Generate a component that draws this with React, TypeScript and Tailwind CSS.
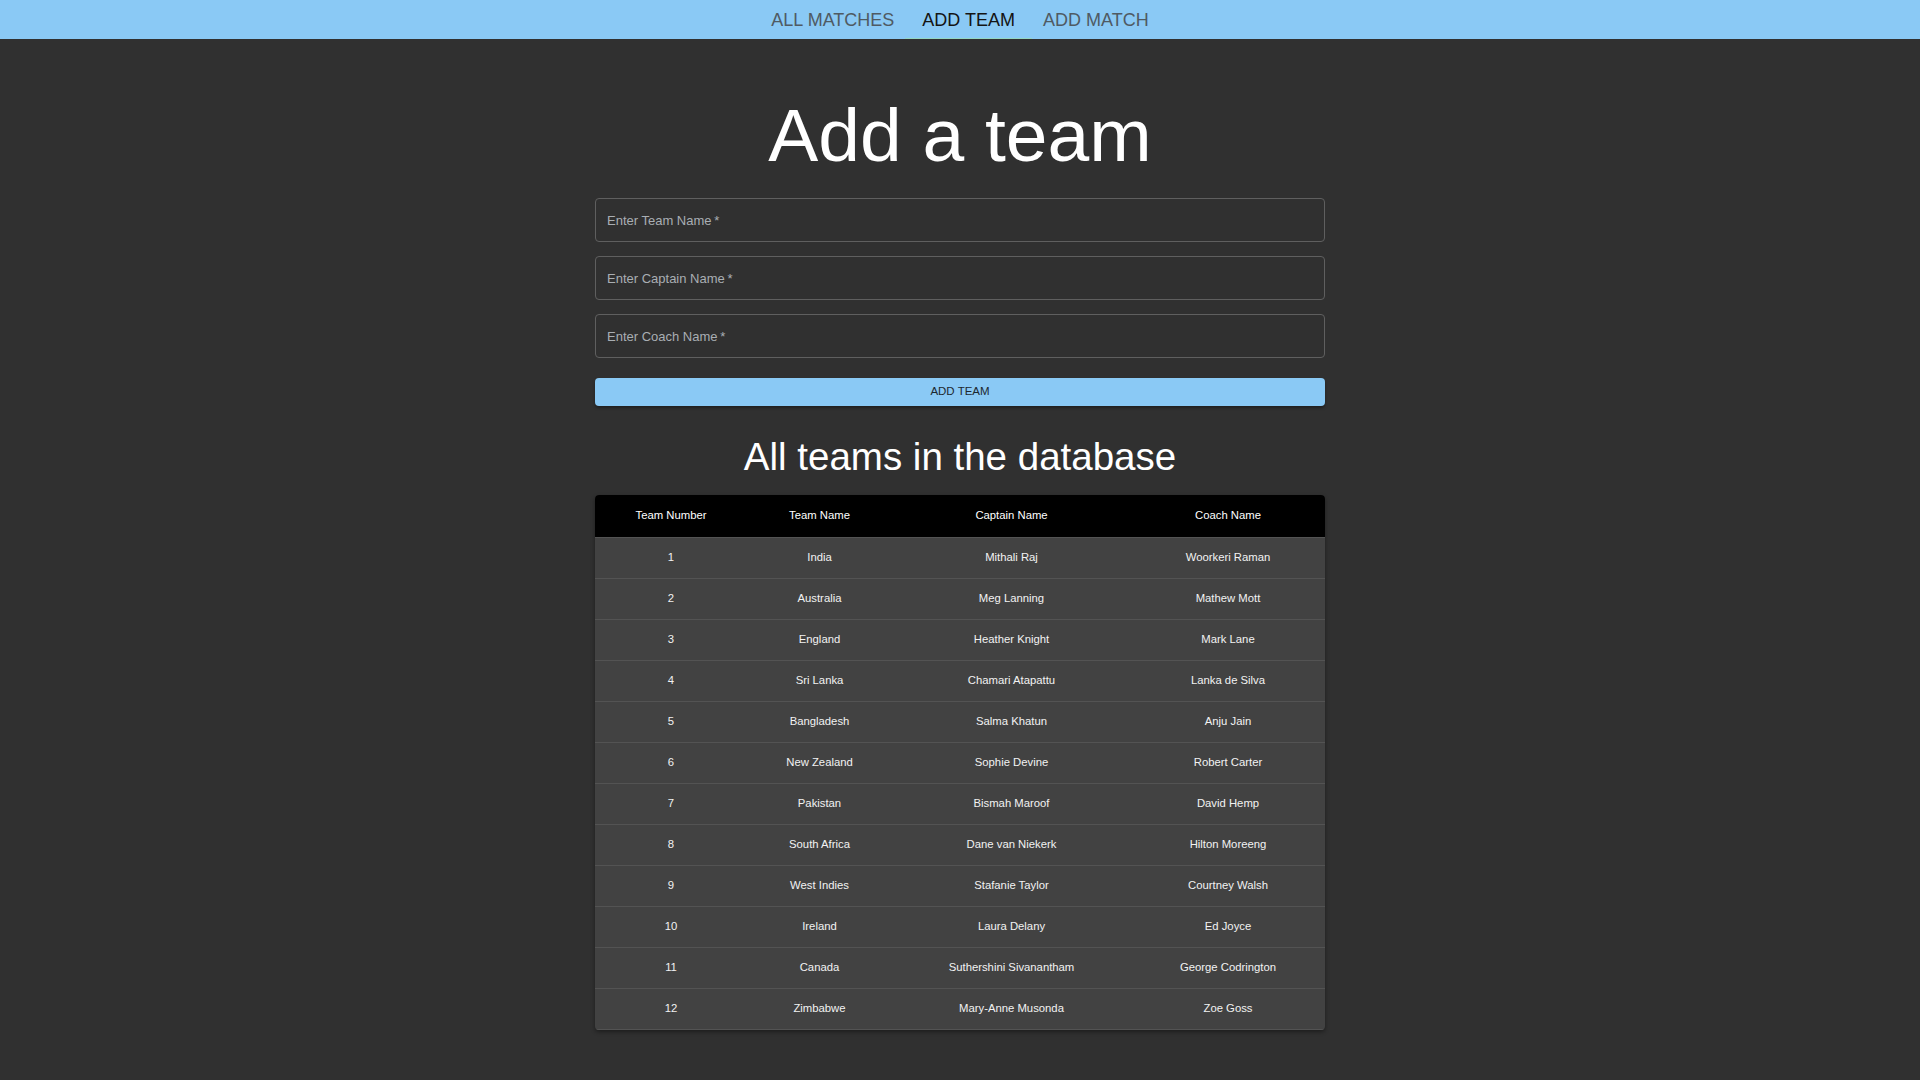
import React from 'react';

const teams = [
  { id: 1, name: 'India', captain: 'Mithali Raj', coach: 'Woorkeri Raman' },
  { id: 2, name: 'Australia', captain: 'Meg Lanning', coach: 'Mathew Mott' },
  { id: 3, name: 'England', captain: 'Heather Knight', coach: 'Mark Lane' },
  { id: 4, name: 'Sri Lanka', captain: 'Chamari Atapattu', coach: 'Lanka de Silva' },
  { id: 5, name: 'Bangladesh', captain: 'Salma Khatun', coach: 'Anju Jain' },
  { id: 6, name: 'New Zealand', captain: 'Sophie Devine', coach: 'Robert Carter' },
  { id: 7, name: 'Pakistan', captain: 'Bismah Maroof', coach: 'David Hemp' },
  { id: 8, name: 'South Africa', captain: 'Dane van Niekerk', coach: 'Hilton Moreeng' },
  { id: 9, name: 'West Indies', captain: 'Stafanie Taylor', coach: 'Courtney Walsh' },
  { id: 10, name: 'Ireland', captain: 'Laura Delany', coach: 'Ed Joyce' },
  { id: 11, name: 'Canada', captain: 'Suthershini Sivanantham', coach: 'George Codrington' },
  { id: 12, name: 'Zimbabwe', captain: 'Mary-Anne Musonda', coach: 'Zoe Goss' },
];

const NavBar: React.FC = () => {
  const tabs = [
    { id: 'matches', label: 'ALL MATCHES' },
    { id: 'team', label: 'ADD TEAM', active: true },
    { id: 'match', label: 'ADD MATCH' },
  ];

  return (
    <nav className="h-[39px] bg-[#8ac9f5] flex justify-center items-stretch">
      {tabs.map((tab) => (
        <a
          key={tab.id}
          href={`#${tab.id}`}
          className={`relative flex items-center px-[14px] text-[18px] leading-none ${
            tab.active ? 'text-[#141414]' : 'text-[#4f5a63]'
          }`}
        >
          {tab.label}
          {tab.active && (
            <span className="absolute bottom-0 -left-[3px] -right-[3px] h-px bg-[#93d6c4]" />
          )}
        </a>
      ))}
    </nav>
  );
};

const TextField: React.FC<{ placeholder: string }> = ({ placeholder }) => (
  <input
    type="text"
    placeholder={`${placeholder}\u2009*`}
    className="h-[44px] w-full rounded-[4px] border border-[#5f5f5f] bg-transparent px-[11px] text-[13px] text-white outline-none placeholder:text-[#a9aeb3]"
  />
);

const App: React.FC = () => {
  return (
    <div className="min-h-screen bg-[#303030] font-['Liberation_Sans',Arial,sans-serif] pb-10">
      <NavBar />

      <main className="mx-auto w-[730px] flex flex-col">
        <h1 className="mt-[59px] text-center text-[75px] leading-none text-white">Add a team</h1>

        {/* Form */}
        <form className="mt-[25px] flex flex-col gap-[14px]">
          <TextField placeholder="Enter Team Name" />
          <TextField placeholder="Enter Captain Name" />
          <TextField placeholder="Enter Coach Name" />
          <button
            type="button"
            className="mt-[6px] h-[28px] rounded-[4px] bg-[#8ac9f5] text-[11.5px] text-[#1d2830] shadow-[0_2px_3px_rgba(0,0,0,0.35)]"
          >
            ADD TEAM
          </button>
        </form>

        <h2 className="mt-[32px] text-center text-[38.5px] leading-none text-white">
          All teams in the database
        </h2>

        {/* Teams table */}
        <div className="mt-[18px] overflow-hidden rounded-[4px] bg-[#424242] shadow-[0_2px_4px_rgba(0,0,0,0.4)]">
          <div className="grid grid-cols-[152px_145px_239px_194px] h-[43px] items-center bg-black border-b border-[#535353] text-[11.3px] text-white text-center">
            <div>Team Number</div>
            <div>Team Name</div>
            <div>Captain Name</div>
            <div>Coach Name</div>
          </div>
          {teams.map((t) => (
            <div
              key={t.id}
              className="grid grid-cols-[152px_145px_239px_194px] h-[41px] items-center border-b border-[#535353] text-[11.3px] text-[#f2f2f2] text-center"
            >
              <div>{t.id}</div>
              <div>{t.name}</div>
              <div>{t.captain}</div>
              <div>{t.coach}</div>
            </div>
          ))}
        </div>
      </main>
    </div>
  );
};

export default App;
